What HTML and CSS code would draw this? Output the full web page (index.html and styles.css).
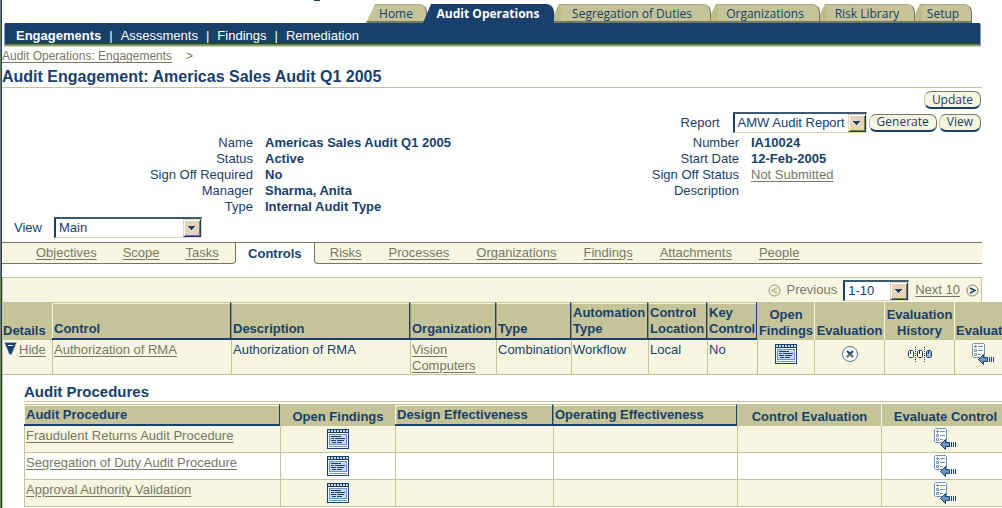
FILE: index.html
```
<!DOCTYPE html>
<html lang="en">
<head>
<meta charset="utf-8">
<title>Audit Engagement: Americas Sales Audit Q1 2005</title>
<link rel="stylesheet" href="styles.css">
</head>
<body>
<svg class="sprite" aria-hidden="true">
  <symbol id="findings" viewBox="0 0 22 20">
    <path fill="#18406b" d="M0 0h22v20H0z"/>
    <path fill="#fff" d="M1 4h20v15H1z"/>
    <path fill="#c9d8ea" d="M1 1h2v2H1zm3 0h2v2H4zm3 0h2v2H7zm3 0h2v2h-2zm3 0h2v2h-2zm3 0h2v2h-2zm3 0h2v2h-2z"/>
    <path fill="#6b93c2" d="M2 5h18v11H2zM2 17h18v1H2z"/>
    <path fill="#c9d8ea" d="M3 6h16v9H3z"/>
    <path fill="#18406b" d="M4 7h10v1H4zM8 9h10v1H8zM4 9h3v1H4zM4 11h5v1H4zm6 0h7v1h-7zM5 13h4v1H5zm5 0h5v1h-5z"/>
  </symbol>
  <symbol id="evaluate" viewBox="0 0 23 22">
    <path fill="#fff" stroke="#6b93c2" d="M.5 1.500l1-1h10l1 1v12l-1 1h-10l-1-1z"/>
    <path fill="#6b93c2" d="M2 3h3v1H2zM3 2h1v3H3zM6 3h5v1H6zM6 7h5v1H6zM6 11h3v1H6z"/>
    <path fill="none" stroke="#6b93c2" d="M2.500 6.500h2v2h-2zM2.500 10.500h2v2h-2z"/>
    <path fill="#6b93c2" stroke="#18406b" d="M6.500 16.500l5-5v3h4v4h-4v3z"/>
    <path fill="#18406b" d="M17 14h1v5h-1zM19 14h1v5h-1zM21 14h1v5h-1z"/>
  </symbol>
  <symbol id="cancel" viewBox="0 0 16 16">
    <circle cx="8" cy="8" r="7.500" fill="#fff" stroke="#4f7199"/>
    <path stroke="#18406b" stroke-width="2" d="M5 5l6 6M11 5l-6 6"/>
    <path stroke="#777862" stroke-width="2" d="M8 8l3 3M8 8l-3 3"/>
  </symbol>
  <symbol id="history" viewBox="0 0 26 16">
    <path stroke="#18406b" stroke-dasharray="1 1" d="M8.500 1v15M17.500 1v15"/>
    <path fill="#fff" stroke="#18406b" d="M2.500 4.500h3l1 1v5l-1 1h-3l-1-1v-5zM11.500 4.500h3l1 1v5l-1 1h-3l-1-1v-5z"/>
    <path fill="#9bb7d8" stroke="#18406b" d="M20.500 4.500h3l1 1v5l-1 1h-3l-1-1v-5z"/>
    <path fill="#18406b" d="M3 5h1v3H3zM12 5h1v3h-1zM21 5h1v3h-1z"/>
  </symbol>
  <symbol id="prev" viewBox="0 0 13 13">
    <circle cx="6.500" cy="6.500" r="5.500" fill="#f7f6e1" stroke="#8b8c72"/>
    <path fill="none" stroke="#c5c499" stroke-width="2" d="M9 4L4 6.500 9 9"/>
  </symbol>
  <symbol id="next" viewBox="0 0 13 13">
    <circle cx="6.500" cy="6.500" r="5.500" fill="#f7f6e1" stroke="#777862"/>
    <path fill="none" stroke="#18406b" stroke-width="1.500" d="M4 4l5 2.500L4 9"/>
  </symbol>
  <symbol id="collapse" viewBox="0 0 13 13">
    <path fill="#18406b" stroke="#a9bdd4" stroke-width=".5" d="M.5 .5h12L7.500 12.500h-2z"/>
    <path fill="#fff" d="M4 3h5v1H4z"/>
  </symbol>
</svg>

<div class="page">
  <span class="logo-mark"></span>
  <nav class="tabs" aria-label="Applications">
    <a class="tab tab-home" href="#">Home</a>
    <a class="tab tab-operations current" href="#">Audit Operations</a>
    <a class="tab tab-duties" href="#">Segregation of Duties</a>
    <a class="tab tab-orgs" href="#">Organizations</a>
    <a class="tab tab-risk" href="#">Risk Library</a>
    <a class="tab tab-setup" href="#">Setup</a>
  </nav>
  <nav class="menu" aria-label="Audit Operations">
    <a class="current" href="#">Engagements</a><span>|</span><a href="#">Assessments</a><span>|</span><a href="#">Findings</a><span>|</span><a href="#">Remediation</a>
  </nav>

  <div class="crumbs"><a href="#">Audit Operations: Engagements</a><span>&gt;</span></div>
  <h1>Audit Engagement: Americas Sales Audit Q1 2005</h1>

  <div class="actions"><button class="btn" type="button">Update</button></div>
  <div class="actions report">
    <label for="report">Report</label>
    <span class="select select-report"><select id="report"><option>AMW Audit Report</option></select></span>
    <button class="btn" type="button">Generate</button>
    <button class="btn" type="button">View</button>
  </div>

  <div class="details">
    <dl>
      <dt>Name</dt><dd>Americas Sales Audit Q1 2005</dd>
      <dt>Status</dt><dd>Active</dd>
      <dt>Sign Off Required</dt><dd>No</dd>
      <dt>Manager</dt><dd>Sharma, Anita</dd>
      <dt>Type</dt><dd>Internal Audit Type</dd>
    </dl>
    <dl>
      <dt>Number</dt><dd>IA10024</dd>
      <dt>Start Date</dt><dd>12-Feb-2005</dd>
      <dt>Sign Off Status</dt><dd><a href="#">Not Submitted</a></dd>
      <dt>Description</dt><dd></dd>
    </dl>
  </div>

  <div class="view">
    <label for="view">View</label>
    <span class="select select-view"><select id="view"><option>Main</option></select></span>
  </div>

  <nav class="subtabs" aria-label="Engagement">
    <div class="group before"><a href="#">Objectives</a><a href="#">Scope</a><a href="#">Tasks</a></div>
    <strong>Controls</strong>
    <div class="group after"><a href="#">Risks</a><a href="#">Processes</a><a href="#">Organizations</a><a href="#">Findings</a><a href="#">Attachments</a><a href="#">People</a></div>
  </nav>

  <section class="results">
    <div class="pager">
      <svg class="arrow"><use href="#prev"/></svg><span>Previous</span>
      <span class="select select-range"><select aria-label="Rows"><option>1-10</option></select></span>
      <a href="#">Next 10</a><svg class="arrow"><use href="#next"/></svg>
    </div>
    <table class="grid controls">
      <colgroup><col class="c-details"><col class="c-control"><col class="c-desc"><col class="c-org"><col class="c-type"><col class="c-auto"><col class="c-loc"><col class="c-key"><col class="c-open"><col class="c-eval"><col class="c-hist"><col class="c-evaluate"></colgroup>
      <thead><tr>
        <th class="plain first">Details</th>
        <th class="sort">Control</th><th class="sort">Description</th><th class="sort">Organization</th><th class="sort">Type</th><th class="sort">Automation Type</th><th class="sort">Control Location</th><th class="sort">Key Control</th>
        <th class="plain">Open Findings</th><th class="plain">Evaluation</th><th class="plain">Evaluation History</th><th class="plain">Evaluate Control</th>
      </tr></thead>
      <tbody><tr>
        <td class="hide"><svg class="toggle"><use href="#collapse"/></svg><a href="#">Hide</a></td>
        <td><a href="#">Authorization of RMA</a></td>
        <td>Authorization of RMA</td>
        <td><a href="#">Vision Computers</a></td>
        <td>Combination</td><td>Workflow</td><td>Local</td><td>No</td>
        <td class="icon"><svg class="i-findings"><use href="#findings"/></svg></td>
        <td class="icon"><svg class="i-cancel"><use href="#cancel"/></svg></td>
        <td class="icon"><svg class="i-history"><use href="#history"/></svg></td>
        <td class="icon evaluate"><svg class="i-evaluate"><use href="#evaluate"/></svg></td>
      </tr></tbody>
    </table>

    <div class="procedures">
      <h2>Audit Procedures</h2>
      <table class="grid audit">
        <colgroup><col class="p-name"><col class="p-open"><col class="p-design"><col class="p-oper"><col class="p-eval"><col class="p-evaluate"></colgroup>
        <thead><tr>
          <th class="sort">Audit Procedure</th><th class="plain">Open Findings</th><th class="sort">Design Effectiveness</th><th class="sort">Operating Effectiveness</th><th class="plain">Control Evaluation</th><th class="plain">Evaluate Control</th>
        </tr></thead>
        <tbody>
          <tr><td><a href="#">Fraudulent Returns Audit Procedure</a></td><td class="icon"><svg class="i-findings"><use href="#findings"/></svg></td><td></td><td></td><td></td><td class="icon"><svg class="i-evaluate"><use href="#evaluate"/></svg></td></tr>
          <tr><td><a href="#">Segregation of Duty Audit Procedure</a></td><td class="icon"><svg class="i-findings"><use href="#findings"/></svg></td><td></td><td></td><td></td><td class="icon"><svg class="i-evaluate"><use href="#evaluate"/></svg></td></tr>
          <tr><td><a href="#">Approval Authority Validation</a></td><td class="icon"><svg class="i-findings"><use href="#findings"/></svg></td><td></td><td></td><td></td><td class="icon"><svg class="i-evaluate"><use href="#evaluate"/></svg></td></tr>
        </tbody>
      </table>
    </div>
  </section>
</div>
</body>
</html>
```
FILE: styles.css
```
:root {
  --navy: #18406b;
  --tan: #c5c499;
  --cream: #f7f6e1;
  --olive: #777862;
}

* { box-sizing: border-box; }

html { height: 100%; overflow: hidden; }

body {
  margin: 0;
  min-height: 100%;
  background: #fff;
  border-left: 1px solid var(--olive);
  color: var(--navy);
  font: 13px/16px "Liberation Sans", Arial, sans-serif;
}

a { color: var(--olive); text-underline-offset: 2px; }

.sprite { display: none; }

.page {
  position: relative;
  min-height: 100vh;
  padding: 4px 20px 0 0;
  border-left: 1px solid var(--navy);
}

.logo-mark {
  position: absolute;
  top: 0;
  left: 312px;
  width: 6px;
  height: 1px;
  background: var(--navy);
}

/* Application tabs */
.tabs {
  display: flex;
  justify-content: flex-end;
  padding-right: 10px;
  font: 12px/18px "Open Sans", sans-serif;
}

.tab {
  height: 19px;
  background: linear-gradient(90deg, #bdbd88 7px, var(--tan) 7px);
  border-top: 1px solid #a9aa86;
  border-bottom: 2px solid var(--olive);
  border-right: 1px solid var(--olive);
  border-top-right-radius: 8px;
  clip-path: polygon(5px 0, 100% 0, 100% 100%, 0 100%, 0 10px);
  color: var(--navy);
  text-align: center;
  text-decoration: none;
  white-space: nowrap;
}

.tab-home {
  width: 61px;
  background: var(--tan);
  clip-path: polygon(9px 0, 100% 0, 100% 100%, 0 100%);
}

.tab-operations { width: 131px; margin-left: -4px; }
.tab-duties { width: 157px; }
.tab-orgs { width: 109px; }
.tab-risk { width: 95px; }
.tab-setup { width: 57px; }

.tab.current {
  background: var(--navy);
  border-color: var(--navy);
  clip-path: polygon(8px 0, 100% 0, 100% 100%, 0 100%);
  color: #fff;
  font-weight: 700;
}

.menu {
  display: flex;
  gap: 8px;
  height: 22px;
  margin: 0 2px 0 3px;
  padding-left: 11px;
  background: var(--navy);
  border-bottom: 1px solid var(--olive);
  box-shadow: 0 1px #7f9cbc, 0 2px #d9d3b4, -1px 1px #7f9cbc, 1px 1px #7f9cbc;
  color: #fff;
  line-height: 25px;
}

.menu a { color: #fff; text-decoration: none; }
.menu .current { font-weight: 700; }

.crumbs {
  display: flex;
  gap: 14px;
  padding-top: 3px;
  color: var(--olive);
  font-size: 12px;
}

h1 {
  margin: 3px 0 0;
  padding-bottom: 1px;
  border-bottom: 1px solid var(--tan);
  font-size: 16px;
  line-height: 19px;
}

/* Buttons and drop-downs */
.actions {
  display: flex;
  justify-content: flex-end;
  align-items: center;
  gap: 2px;
  padding: 3px 1px 0 0;
}

.report { padding-top: 3px; }
.report label { margin-right: 11px; }

.btn {
  height: 18px;
  padding: 0 7px;
  background: var(--cream);
  border: 1px solid var(--olive);
  border-bottom: 2px solid var(--navy);
  border-left-color: var(--tan);
  border-radius: 7px;
  color: var(--navy);
  font: 12px/14px "Open Sans", sans-serif;
}

.select { position: relative; display: inline-block; height: 21px; }

.select select {
  display: block;
  width: 100%;
  height: 100%;
  padding: 0 3px;
  appearance: none;
  background: #fff;
  border: 2px solid var(--navy);
  border-top-color: #3c5a72;
  border-right: 1px solid #e4d5b8;
  border-bottom: 1px solid #e4d5b8;
  border-radius: 0;
  color: var(--navy);
  font: 13px/16px "Liberation Sans", Arial, sans-serif;
}

.select::after {
  content: "";
  position: absolute;
  top: 2px;
  right: 1px;
  bottom: 1px;
  width: 16px;
  background:
    linear-gradient(var(--navy), var(--navy)) 4px 6px / 7px 1px no-repeat,
    linear-gradient(var(--navy), var(--navy)) 5px 7px / 5px 1px no-repeat,
    linear-gradient(var(--navy), var(--navy)) 6px 8px / 3px 1px no-repeat,
    linear-gradient(var(--navy), var(--navy)) 7px 9px / 1px 1px no-repeat,
    #e4d5b8;
  border: 1px solid #e4d5b8;
  border-right: 1px solid var(--navy);
  border-bottom: 1px solid var(--navy);
  box-shadow: inset 1px 1px #fff, inset -1px -1px var(--olive);
  pointer-events: none;
}

.select-report { width: 134px; }
.select-view { width: 148px; }
.select-range { width: 66px; }

/* Engagement details */
.details {
  display: grid;
  grid-template-columns: 1fr 1fr;
  padding-top: 2px;
}

.details dl {
  display: grid;
  grid-template-columns: 251px 1fr;
  column-gap: 12px;
  align-content: start;
  margin: 0;
}

.details dl + dl { grid-template-columns: 247px 1fr; }
.details dt { text-align: right; }
.details dd { margin: 0; font-weight: 700; }
.details dd a { font-weight: 400; }

.view {
  display: flex;
  align-items: center;
  gap: 12px;
  padding: 2px 0 0 12px;
}

/* Section tabs */
.subtabs {
  display: flex;
  height: 22px;
  margin-top: 4px;
  line-height: 20px;
}

.subtabs .group {
  display: flex;
  gap: 27px;
  background: var(--cream);
  border: 0 solid var(--olive);
  border-width: 1px 0;
}

.subtabs .before { gap: 26px; padding: 0 16px 0 34px; border-right-width: 1px; border-bottom-right-radius: 4px; }
.subtabs .after { flex: 1; padding-left: 15px; border-left-width: 1px; border-bottom-left-radius: 4px; }

.subtabs strong {
  width: 78px;
  border-top: 1px solid var(--olive);
  text-align: center;
  line-height: 21px;
}

/* Result tables */
.results {
  min-height: 240px;
  margin-top: 13px;
  border-left: 1px solid var(--tan);
}

.pager {
  display: flex;
  justify-content: flex-end;
  align-items: center;
  gap: 6px;
  height: 25px;
  padding-right: 2px;
  background: var(--cream);
  border: solid var(--tan);
  border-width: 1px 1px 0 0;
  color: var(--olive);
}

.arrow { width: 13px; height: 13px; }

.grid { border-spacing: 0; table-layout: fixed; }
.grid col { width: 70px; }

.grid th {
  height: 38px;
  padding: 0 0 1px 2px;
  background: var(--tan);
  text-align: left;
  vertical-align: bottom;
}

.grid .plain {
  padding: 0 0 1px;
  border-left: 1px solid var(--cream);
  text-align: center;
}

.grid .sort {
  border-top: 1px solid var(--tan);
  border-right: 1px solid var(--navy);
  border-bottom: 2px solid var(--navy);
  box-shadow: inset 1px 1px var(--cream);
}

.grid .sort + .sort { box-shadow: inset 1px 0 #8b8c72, inset 0 1px var(--cream); }
.grid .sort + .plain { border-left-color: var(--tan); }
.grid .first { border-left: 0; text-align: left; }

.grid td {
  padding: 2px 0 0 1px;
  background: var(--cream);
  border-left: 1px solid var(--tan);
  border-bottom: 1px solid var(--tan);
  vertical-align: top;
}

.grid td svg { display: block; }
.grid .icon { padding: 3px 0 0; }
.grid .icon svg { margin: 0 auto; }
.grid .icon .i-findings { margin-top: 1px; }
.grid .icon .i-cancel, .grid .icon .i-history { margin-top: 3px; }

.controls { width: 1056px; }
.controls td { height: 35px; }
.controls td:first-child { border-left: 0; }
.controls .c-details { width: 49px; }
.controls .c-control, .controls .c-desc { width: 179px; }
.controls .c-org { width: 86px; }
.controls .c-type { width: 75px; }
.controls .c-auto { width: 77px; }
.controls .c-loc { width: 59px; }
.controls .c-key { width: 50px; }
.controls .c-open { width: 57px; }
.controls .c-evaluate { width: 105px; }
.controls .icon.evaluate svg { margin-left: 17px; }
.controls th.plain:last-child { padding-left: 1px; text-align: left; white-space: nowrap; }

.grid .hide { padding-left: 1px; }
.hide svg { float: left; width: 13px; height: 13px; margin-right: 2px; }

.i-findings { width: 22px; height: 20px; }
.i-evaluate { width: 23px; height: 22px; }
.i-cancel { width: 16px; height: 16px; }
.i-history { width: 26px; height: 16px; }

.procedures { width: 985px; margin: 8px 0 0 21px; }

h2 {
  margin: 0 0 2px;
  border-bottom: 1px solid var(--tan);
  font-size: 15px;
  line-height: 18px;
}

.audit { width: 985px; }
.audit th { height: 22px; }
.audit td { height: 27px; }
.audit .icon { padding-top: 2px; }
.audit tbody tr:nth-child(even) td { background: #fff; }
.audit .p-name { width: 256px; }
.audit .p-open { width: 115px; }
.audit .p-design { width: 158px; }
.audit .p-oper { width: 184px; }
.audit .p-eval { width: 144px; }
.audit .p-evaluate { width: 128px; }
```
